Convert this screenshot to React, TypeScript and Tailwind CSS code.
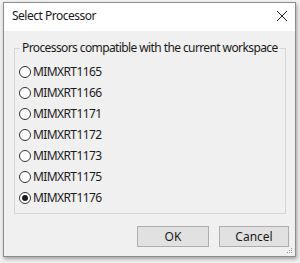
import React from "react";

const items = [
  "MIMXRT1165",
  "MIMXRT1166",
  "MIMXRT1171",
  "MIMXRT1172",
  "MIMXRT1173",
  "MIMXRT1175",
  "MIMXRT1176",
];

function Radio({ checked }: { checked: boolean }) {
  return (
    <span className="w-[12px] h-[12px] rounded-full border border-[#333333] bg-white flex items-center justify-center shrink-0">
      {checked && <span className="w-[6px] h-[6px] rounded-full bg-[#1a1a1a]" />}
    </span>
  );
}

export default function App() {
  return (
    <div
      className="w-[300px] h-[263px] bg-[#f2f2f2] pt-[2px] pl-[3px] text-[12px] text-[#1a1a1a]"
      style={{ fontFamily: '"Noto Sans", "Open Sans", sans-serif' }}
    >
      <div className="w-[293px] h-[255px] border border-[#8c8c8c] bg-[#f0f0f0] flex flex-col shadow-[1px_2px_4px_rgba(0,0,0,0.35)]">
        <div className="h-[28px] bg-white flex items-center justify-between pl-[8px] pr-[7px] shrink-0">
          <span className="leading-none -mt-[2px] whitespace-nowrap tracking-[-0.5px]">Select Processor</span>
          <svg width="12" height="12" viewBox="0 0 12 12" className="-mt-[2px]">
            <path d="M1 1 L11 11 M11 1 L1 11" stroke="#222" strokeWidth="1" fill="none" />
          </svg>
        </div>
        <div className="flex-1 flex flex-col relative">
          <fieldset className="ml-[10px] mt-[9px] w-[272px] h-[174px] border border-[#d5d5d5] pl-[4px] min-w-0">
            <legend className="ml-[1px] px-[2px] leading-[16px] whitespace-nowrap tracking-[-0.6px]">
              Processors compatible with the current workspace
            </legend>
            <div className="flex flex-col pt-[5px]">
              {items.map((it, i) => (
                <div key={it} className="h-[21px] flex items-center gap-[2px]">
                  <Radio checked={i === items.length - 1} />
                  <span className="leading-none tracking-[-0.6px]">{it}</span>
                </div>
              ))}
            </div>
          </fieldset>
          <div className="flex justify-end gap-[10px] mt-[12px] mr-[6px]">
            <button className="w-[72px] h-[21px] bg-[#e1e1e1] border border-[#adadad] leading-none">OK</button>
            <button className="w-[70px] h-[21px] bg-[#e1e1e1] border border-[#adadad] leading-none">Cancel</button>
          </div>
          <svg width="6" height="6" viewBox="0 0 6 6" className="absolute right-[2px] bottom-[2px]">
            <rect x="4" y="0" width="1" height="1" fill="#999" />
            <rect x="2" y="2" width="1" height="1" fill="#999" />
            <rect x="4" y="2" width="1" height="1" fill="#999" />
            <rect x="0" y="4" width="1" height="1" fill="#999" />
            <rect x="2" y="4" width="1" height="1" fill="#999" />
            <rect x="4" y="4" width="1" height="1" fill="#999" />
          </svg>
        </div>
      </div>
    </div>
  );
}
